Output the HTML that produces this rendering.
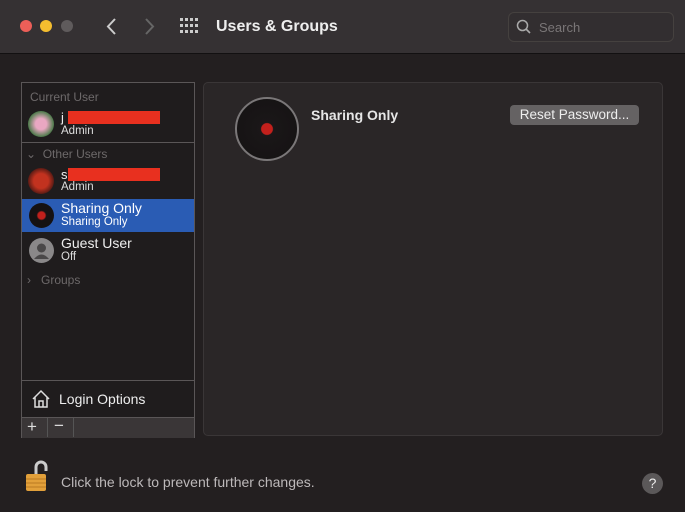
<!DOCTYPE html><html><head><style>
body{margin:0;width:685px;height:512px;background:#231f20;font-family:"Liberation Sans",sans-serif;position:relative;overflow:hidden;color:#e6e6e6}
.a{position:absolute}
.tb{left:0;top:0;width:685px;height:53px;background:#353133;border-bottom:1px solid #121011}
.dot{width:12px;height:12px;border-radius:50%;top:20px}
.side{left:21px;top:82px;width:172px;height:354px;border:1px solid #5a5657;background:#1f1c1d}
.panel{left:203px;top:82px;width:458px;height:352px;border:1px solid #3a3637;border-radius:5px;background:#2a2627}
.lbl{font-size:12px;color:#6d696a}
.nm{font-size:13px;color:#eee}
.sub{font-size:11.5px;color:#ddd}
.red{background:#e8301f;height:13px}
</style></head><body>
<div class="a tb"></div>
<div class="a dot" style="left:20px;background:#ed5f58"></div>
<div class="a dot" style="left:40px;background:#f4bd2f"></div>
<div class="a dot" style="left:61px;background:#5f5b5c"></div>
<svg class="a" style="left:104px;top:17px" width="60" height="20"><path d="M11 2 L4 9.5 L11 17" stroke="#ccc" stroke-width="2" fill="none"/><path d="M42 2 L49 9.5 L42 17" stroke="#666" stroke-width="2" fill="none"/></svg>
<svg class="a" style="left:180px;top:18px" width="20" height="16" fill="#ccc"><g id="r"><rect x="0" y="0" width="3" height="3"/><rect x="5" y="0" width="3" height="3"/><rect x="10" y="0" width="3" height="3"/><rect x="15" y="0" width="3" height="3"/></g><use href="#r" y="6"/><use href="#r" y="12"/></svg>
<div class="a" style="left:216px;top:18px;font-size:16px;font-weight:bold;color:#eee">Users &amp; Groups</div>
<div class="a" style="left:508px;top:12px;width:164px;height:28px;border:1px solid #45413f;border-radius:6px;background:#322e30"></div>
<svg class="a" style="left:516px;top:19px" width="16" height="16"><circle cx="6.5" cy="6.5" r="5" stroke="#aaa" stroke-width="1.5" fill="none"/><path d="M10 10 L14 14" stroke="#aaa" stroke-width="1.6"/></svg>
<div class="a" style="left:539px;top:20px;font-size:13px;color:#7a7677">Search</div>

<div class="a side"></div>
<div class="a lbl" style="left:30px;top:90px">Current User</div>
<div class="a" style="left:28px;top:111px;width:26px;height:26px;border-radius:50%;background:radial-gradient(circle,#e9a7c2 30%,#4c7a4a 70%)"></div>
<div class="a nm" style="left:61px;top:110px">j</div>
<div class="a red" style="left:68px;top:111px;width:92px"></div>
<div class="a sub" style="left:61px;top:125px">Admin</div>
<div class="a" style="left:22px;top:142px;width:172px;height:1px;background:#5a5657"></div>
<div class="a lbl" style="left:26px;top:147px">⌄&nbsp; Other Users</div>
<div class="a" style="left:28px;top:168px;width:26px;height:26px;border-radius:50%;background:radial-gradient(circle,#c2321f 40%,#3a1411 80%)"></div>
<div class="a nm" style="left:61px;top:167px">s</div>
<div class="a red" style="left:68px;top:168px;width:92px"></div>
<div class="a sub" style="left:61px;top:181px">Admin</div>
<div class="a" style="left:22px;top:199px;width:172px;height:33px;background:#2a5cb4"></div>
<div class="a" style="left:29px;top:203px;width:25px;height:25px;border-radius:50%;background:radial-gradient(circle,#c0201c 20%,#151213 28%,#151213 90%,#555 100%)"></div>
<div class="a nm" style="left:61px;top:200px;font-size:14px;color:#fff">Sharing Only</div>
<div class="a sub" style="left:61px;top:216px;color:#fff">Sharing Only</div>
<div class="a" style="left:29px;top:238px;width:25px;height:25px;border-radius:50%;background:#8a8889"></div>
<svg class="a" style="left:29px;top:238px" width="25" height="25"><circle cx="12.5" cy="10" r="4.5" fill="#4a4849"/><path d="M5 21 Q12.5 12 20 21" fill="#4a4849"/></svg>
<div class="a nm" style="left:61px;top:235px;font-size:14px">Guest User</div>
<div class="a sub" style="left:61px;top:251px">Off</div>
<div class="a lbl" style="left:27px;top:273px">›&nbsp;&nbsp; Groups</div>
<div class="a" style="left:22px;top:380px;width:172px;height:1px;background:#5a5657"></div>
<svg class="a" style="left:31px;top:389px" width="20" height="20"><path d="M2 10 L10 2 L18 10 M4 8 V18 H16 V8 M8 18 V12 H12 V18" stroke="#ddd" stroke-width="1.5" fill="none"/></svg>
<div class="a nm" style="left:59px;top:391px;font-size:14px">Login Options</div>
<div class="a" style="left:22px;top:417px;width:172px;height:20px;background:#3a3637;border-top:1px solid #5a5657"></div>
<div class="a" style="left:47px;top:418px;width:1px;height:19px;background:#555"></div>
<div class="a" style="left:73px;top:418px;width:1px;height:19px;background:#555"></div>
<div class="a" style="left:27px;top:417px;font-size:17px;color:#ddd">+</div>
<div class="a" style="left:54px;top:416px;font-size:17px;color:#ddd">−</div>

<div class="a panel"></div>
<div class="a" style="left:235px;top:97px;width:60px;height:60px;border-radius:50%;border:2px solid #7a7778;background:radial-gradient(circle,#c3201c 13%,#1a1718 15%,#151213 90%,#3a3738 100%)"></div>
<div class="a" style="left:311px;top:107px;font-size:14px;font-weight:bold;color:#e6e6e6">Sharing Only</div>
<div class="a" style="left:510px;top:105px;width:129px;height:20px;border-radius:4px;background:#656263;color:#eee;font-size:13.5px;text-align:center;line-height:20px">Reset Password...</div>

<svg class="a" style="left:24px;top:459px" width="26" height="34"><path d="M12 16 V8 A5 5 0 0 1 22 8 V12" stroke="#ccc" stroke-width="3" fill="none"/><rect x="2" y="15" width="20" height="17" rx="2" fill="#e2a03a"/><path d="M2 20H22M2 24H22M2 28H22" stroke="#b97a22"/></svg>
<div class="a" style="left:61px;top:474px;font-size:14px;color:#bdb9ba">Click the lock to prevent further changes.</div>
<div class="a" style="left:642px;top:473px;width:21px;height:21px;border-radius:50%;background:#5b5859;color:#eee;font-size:14px;text-align:center;line-height:21px">?</div>
</body></html>
